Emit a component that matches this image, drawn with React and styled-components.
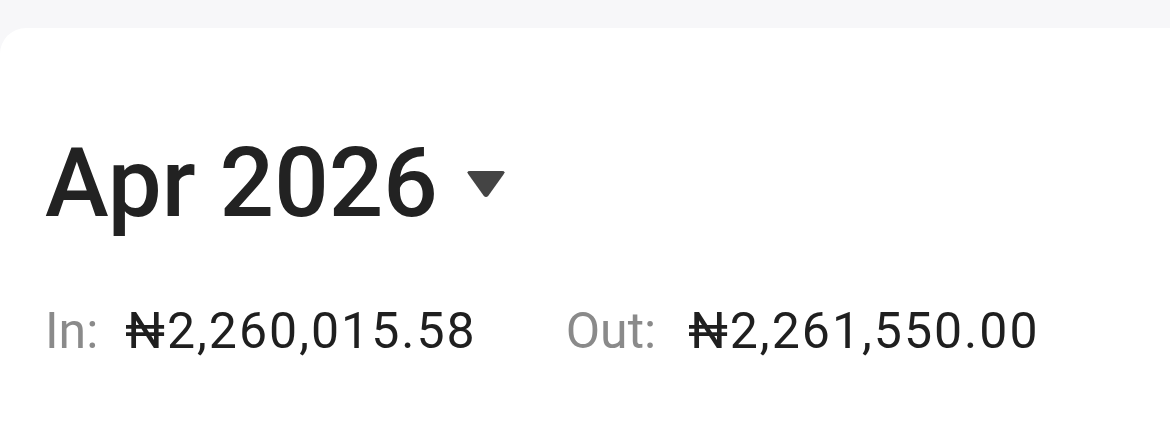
import React from "react";
import styled, { createGlobalStyle } from "styled-components";

const Global = createGlobalStyle`
  html, body { margin: 0; padding: 0; background: #f7f7f9; }
  body { font-family: Roboto, "Liberation Sans", sans-serif; }
`;

const Page = styled.div`
  width: 1170px;
  height: 439px;
  overflow: hidden;
  padding-top: 28px;
  box-sizing: border-box;
`;

const Card = styled.section`
  background: #ffffff;
  border-top-left-radius: 26px;
  height: 100%;
  padding: 107px 0 0 45px;
  box-sizing: border-box;
`;

const TitleRow = styled.div`
  display: flex;
  align-items: center;
  gap: 28px;
`;

const Title = styled.h1`
  margin: 0;
  font-family: Roboto, "Liberation Sans", sans-serif;
  font-weight: 500;
  font-size: 96px;
  line-height: 1;
  color: #222222;
`;

const Caret = styled.svg`
  width: 40px;
  height: 28px;
  flex: none;
  margin-top: 2px;
`;

const Totals = styled.div`
  display: flex;
  gap: 89px;
  margin-top: 75px;
`;

const Total = styled.div`
  display: flex;
  align-items: baseline;
  gap: ${(p) => p.$gap}px;
  font-size: 50px;
  line-height: 1;
`;

const Label = styled.span`
  color: #8a8a8a;
  font-family: Roboto, sans-serif;
`;

const Amount = styled.span`
  color: #1f1f1f;
  font-family: Roboto, sans-serif;
  letter-spacing: 2px;
`;

export default function App() {
  return (
    <Page>
      <Global />
      <Card>
        <TitleRow>
          <Title>Apr 2026</Title>
          <Caret viewBox="0 0 40 28">
            <path
              d="M4 1 H36 Q40 1 37.5 4.5 L22.5 25.5 Q20 28.5 17.5 25.5 L2.5 4.5 Q0 1 4 1 Z"
              fill="#444444"
            />
          </Caret>
        </TitleRow>
        <Totals>
          <Total $gap={27}>
            <Label>In:</Label>
            <Amount>₦2,260,015.58</Amount>
          </Total>
          <Total $gap={32}>
            <Label>Out:</Label>
            <Amount>₦2,261,550.00</Amount>
          </Total>
        </Totals>
      </Card>
    </Page>
  );
}
